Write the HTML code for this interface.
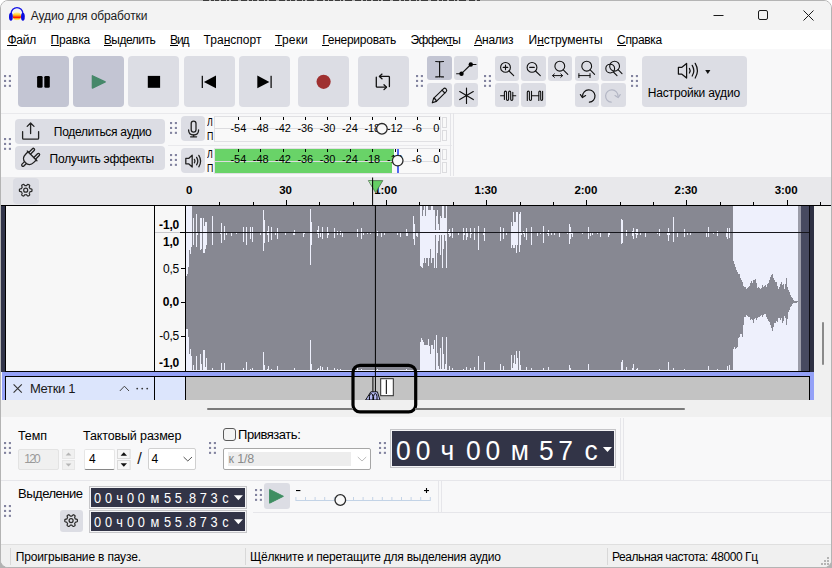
<!DOCTYPE html>
<html lang="ru"><head><meta charset="utf-8"><title>Аудио для обработки</title>
<style>
html,body{margin:0;padding:0;background:#fff;}
body{width:832px;height:568px;overflow:hidden;position:relative;font-family:"Liberation Sans",sans-serif;}
#win{position:absolute;left:0;top:0;width:830px;height:566px;border:1px solid #b4b4b4;border-radius:8px;background:#f8f8f9;overflow:hidden;}
#in{position:absolute;left:-1px;top:-1px;width:832px;height:568px;}
.a{position:absolute;}
.t{position:absolute;white-space:pre;line-height:1;color:#000;}
.btn{position:absolute;background:#dcdde4;border-radius:3px;}
.btn.dn{background:#c3c5d3;}
.hl{position:absolute;height:1px;background:#e6e6e8;}
.vl{position:absolute;width:1px;background:#e6e6e8;}
svg{position:absolute;overflow:visible;}
u{text-decoration:underline;text-decoration-thickness:1px;}
</style></head><body><div class="a" style="left:0;top:558px;width:10px;height:10px;background:#b2b2b2"></div><div class="a" style="left:822px;top:558px;width:10px;height:10px;background:#b2b2b2"></div><div id="win"><div id="in">
<div class="a" style="left:0px;top:0px;width:832px;height:30px;background:#f3f3f3;"></div><svg style="left:4px;top:2px" width="28" height="26" viewBox="4 2 28 26">
<defs><linearGradient id="og" x1="0" y1="0" x2="0" y2="1"><stop offset="0" stop-color="#fff3b0"/><stop offset="0.3" stop-color="#ffd02a"/><stop offset="0.5" stop-color="#ff7a10"/><stop offset="0.58" stop-color="#ff1a00"/><stop offset="0.66" stop-color="#ff1a00"/><stop offset="0.76" stop-color="#ff9a18"/><stop offset="0.9" stop-color="#ffe060"/><stop offset="1" stop-color="#fff3b0"/></linearGradient></defs>
<ellipse cx="16.9" cy="16.3" rx="4.1" ry="4" fill="url(#og)"/>
<path d="M11.2 14.2 V13.4 A5.8 5.8 0 0 1 22.8 13.4 V14.2" fill="none" stroke="#1414e6" stroke-width="1.3"/>
<ellipse cx="10.9" cy="16.7" rx="1.9" ry="4" fill="#0a0ae0"/>
<ellipse cx="22.9" cy="16.7" rx="1.9" ry="4" fill="#0a0ae0"/>
</svg><span class="t" style="left:30.80px;top:10.00px;font-size:12px;color:#1c1c1c;letter-spacing:-0.114px;">Аудио для обработки</span><svg style="left:700px;top:0" width="132" height="30" viewBox="0 0 132 30">
<line x1="13.5" y1="15.5" x2="23.5" y2="15.5" stroke="#1a1a1a" stroke-width="1"/>
<rect x="58.5" y="10.5" width="9" height="9" rx="1.5" fill="none" stroke="#1a1a1a" stroke-width="1"/>
<path d="M103.5 10.5 L113.5 20.5 M113.5 10.5 L103.5 20.5" stroke="#1a1a1a" stroke-width="1" fill="none"/>
</svg><div class="a" style="left:0px;top:30px;width:832px;height:19px;background:#ffffff;"></div><span class="t" style="left:7.40px;top:34.00px;font-size:12px;letter-spacing:-0.172px;">Файл</span><div class="a" style="left:7.40px;top:45px;width:9.12px;height:1px;background:#000"></div><span class="t" style="left:50.50px;top:34.00px;font-size:12px;letter-spacing:-0.169px;">Правка</span><div class="a" style="left:50.50px;top:45px;width:8.62px;height:1px;background:#000"></div><span class="t" style="left:103.70px;top:34.00px;font-size:12px;letter-spacing:-0.466px;">Выделить</span><div class="a" style="left:103.70px;top:45px;width:8.02px;height:1px;background:#000"></div><span class="t" style="left:170.00px;top:34.00px;font-size:12px;letter-spacing:-1.109px;">Вид</span><div class="a" style="left:170.00px;top:45px;width:8.02px;height:1px;background:#000"></div><span class="t" style="left:203.60px;top:34.00px;font-size:12px;letter-spacing:0.023px;">Транспорт</span><div class="a" style="left:223.68px;top:45px;width:6.62px;height:1px;background:#000"></div><span class="t" style="left:275.10px;top:34.00px;font-size:12px;letter-spacing:0.183px;">Треки</span><div class="a" style="left:275.10px;top:45px;width:7.34px;height:1px;background:#000"></div><span class="t" style="left:322.30px;top:34.00px;font-size:12px;letter-spacing:-0.254px;">Генерировать</span><div class="a" style="left:322.30px;top:45px;width:6.50px;height:1px;background:#000"></div><span class="t" style="left:410.50px;top:34.00px;font-size:12px;letter-spacing:-0.677px;">Эффекты</span><div class="a" style="left:447.41px;top:45px;width:5.64px;height:1px;background:#000"></div><span class="t" style="left:474.40px;top:34.00px;font-size:12px;letter-spacing:-0.283px;">Анализ</span><div class="a" style="left:474.40px;top:45px;width:8.02px;height:1px;background:#000"></div><span class="t" style="left:528.60px;top:34.00px;font-size:12px;letter-spacing:-0.073px;">Инструменты</span><div class="a" style="left:537.15px;top:45px;width:6.64px;height:1px;background:#000"></div><span class="t" style="left:617.10px;top:34.00px;font-size:12px;letter-spacing:-0.330px;">Справка</span><div class="a" style="left:617.10px;top:45px;width:8.67px;height:1px;background:#000"></div><div class="hl" style="left:0;top:112.5px;width:832px;background:#e9e9ec"></div><svg style="left:4px;top:75px" width="8" height="13" viewBox="0 0 8 13"><rect x="0" y="0" width="2.1" height="2.1" fill="#82839f"/><rect x="4.85" y="0" width="2.1" height="2.1" fill="#82839f"/><rect x="0" y="4.9" width="2.1" height="2.1" fill="#82839f"/><rect x="4.85" y="4.9" width="2.1" height="2.1" fill="#82839f"/><rect x="0" y="9.8" width="2.1" height="2.1" fill="#82839f"/><rect x="4.85" y="9.8" width="2.1" height="2.1" fill="#82839f"/></svg><div class="btn dn" style="left:18.1px;top:56.2px;width:51px;height:51px;border-radius:4px"></div><div class="btn dn" style="left:73.3px;top:56.2px;width:51px;height:51px;border-radius:4px"></div><div class="btn " style="left:128.4px;top:56.2px;width:51px;height:51px;border-radius:4px"></div><div class="btn " style="left:183.6px;top:56.2px;width:51px;height:51px;border-radius:4px"></div><div class="btn " style="left:239.1px;top:56.2px;width:51px;height:51px;border-radius:4px"></div><div class="btn " style="left:298.3px;top:56.2px;width:51px;height:51px;border-radius:4px"></div><div class="btn " style="left:357.5px;top:56.2px;width:51px;height:51px;border-radius:4px"></div><svg style="left:0;top:56px" width="420" height="51" viewBox="0 56 420 51">
<rect x="37.1" y="75.9" width="5.5" height="11.9" rx="1.4" fill="#000"/><rect x="44.3" y="75.9" width="5.5" height="11.9" rx="1.4" fill="#000"/>
<path d="M92.4 75.8 L105.2 81.9 L92.4 88 Z" fill="#46886a" stroke="#46886a" stroke-width="1.4" stroke-linejoin="round"/>
<rect x="147.8" y="75.9" width="12.3" height="11.9" fill="#000"/>
<rect x="201.7" y="75.8" width="1.2" height="12.2" fill="#000"/><path d="M216 75.6 L203.9 81.9 L216 88.2 Z" fill="#000"/>
<path d="M257.3 75.6 L269.4 81.9 L257.3 88.2 Z" fill="#000"/><rect x="270.5" y="75.8" width="1.2" height="12.2" fill="#000"/>
<circle cx="323.6" cy="81.8" r="7.1" fill="#9f3030"/>
<g fill="none" stroke="#111" stroke-width="1.3" stroke-linecap="round" stroke-linejoin="round">
<path d="M376.3 77.2 V86.4 Q376.3 87.2 377.1 87.2 H386.4"/><path d="M384 84.8 L386.5 87.2 L384 89.6"/>
<path d="M389.4 86.5 V77.2 Q389.4 76.4 388.6 76.4 H379.5"/><path d="M382 74.1 L379.4 76.4 L382 78.8"/>
</g>
</svg><svg style="left:416.2px;top:75px" width="8" height="13" viewBox="0 0 8 13"><rect x="0" y="0" width="2.1" height="2.1" fill="#82839f"/><rect x="4.85" y="0" width="2.1" height="2.1" fill="#82839f"/><rect x="0" y="4.9" width="2.1" height="2.1" fill="#82839f"/><rect x="4.85" y="4.9" width="2.1" height="2.1" fill="#82839f"/><rect x="0" y="9.8" width="2.1" height="2.1" fill="#82839f"/><rect x="4.85" y="9.8" width="2.1" height="2.1" fill="#82839f"/></svg><div class="btn dn" style="left:427.4px;top:56.3px;width:24.4px;height:24.2px"></div><div class="btn " style="left:454.1px;top:56.3px;width:24.4px;height:24.2px"></div><div class="btn " style="left:427.4px;top:83.1px;width:24.4px;height:24.2px"></div><div class="btn " style="left:454.1px;top:83.1px;width:24.4px;height:24.2px"></div><svg style="left:424px;top:52px" width="60" height="60" viewBox="424 52 60 60">
<g fill="none" stroke="#111" stroke-width="1.15" stroke-linecap="round" stroke-linejoin="round">
<path d="M439.6 61.6 V76.8"/>
<path d="M435.7 61.5 Q439.6 61.5 439.6 61.9 Q439.6 61.5 443.5 61.5"/>
<path d="M435.7 76.9 Q439.6 76.9 439.6 76.5 Q439.6 76.9 443.5 76.9"/>
<path d="M456.6 73.7 H461.5 L470.8 64.5 H476"/>
<path d="M432.3 102.8 L433.6 98.4 L443.4 88.8 Q444.6 87.6 446 88.8 Q447.4 90.2 446.2 91.6 L436.4 101.4 Z"/>
<path d="M433.6 98.4 Q435.8 98.6 436.4 101.4"/>
<path d="M442 90.2 L444.8 93"/>
<path d="M466.5 88 V103.4 M459.7 91.6 L473.3 99.6 M459.7 99.6 L473.3 91.6"/>
</g>
<circle cx="461.5" cy="73.7" r="2.2" fill="#000"/><circle cx="470.8" cy="64.5" r="2.2" fill="#000"/>
</svg><svg style="left:483.8px;top:75px" width="8" height="13" viewBox="0 0 8 13"><rect x="0" y="0" width="2.1" height="2.1" fill="#82839f"/><rect x="4.85" y="0" width="2.1" height="2.1" fill="#82839f"/><rect x="0" y="4.9" width="2.1" height="2.1" fill="#82839f"/><rect x="4.85" y="4.9" width="2.1" height="2.1" fill="#82839f"/><rect x="0" y="9.8" width="2.1" height="2.1" fill="#82839f"/><rect x="4.85" y="9.8" width="2.1" height="2.1" fill="#82839f"/></svg><div class="btn " style="left:494.7px;top:56.4px;width:24.4px;height:24.2px"></div><div class="btn " style="left:521.3px;top:56.4px;width:24.4px;height:24.2px"></div><div class="btn " style="left:548px;top:56.4px;width:24.4px;height:24.2px"></div><div class="btn " style="left:574.6px;top:56.4px;width:24.4px;height:24.2px"></div><div class="btn " style="left:601.2px;top:56.4px;width:24.4px;height:24.2px"></div><div class="btn " style="left:494.7px;top:83.1px;width:24.4px;height:24.2px"></div><div class="btn " style="left:521.3px;top:83.1px;width:24.4px;height:24.2px"></div><div class="btn " style="left:574.6px;top:83.1px;width:24.4px;height:24.2px"></div><div class="btn " style="left:601.2px;top:83.1px;width:24.4px;height:24.2px"></div><svg style="left:490px;top:52px" width="140" height="60" viewBox="490 52 140 60">
<g fill="none" stroke="#111" stroke-width="1.1" stroke-linecap="round" stroke-linejoin="round">
<circle cx="505.5" cy="67.4" r="4.9"/><path d="M509 71 L513.7 75.7"/><path d="M503.2 67.4 H507.8 M505.5 65.1 V69.7"/>
<circle cx="532" cy="67.4" r="4.9"/><path d="M535.5 71 L540.3 75.7"/><path d="M529.7 67.4 H534.3"/>
<circle cx="559.8" cy="66.2" r="4.9"/><path d="M563.3 69.8 L567.8 74.3"/>
<path d="M552.6 75.6 H562.6 M554.4 73.9 L552.6 75.6 L554.4 77.3 M560.8 73.9 L562.6 75.6 L560.8 77.3" stroke-width="1"/>
<circle cx="586.7" cy="66.2" r="4.9"/><path d="M590.2 69.8 L594.6 74.3"/>
<path d="M578.9 75.6 H590 M578.9 73.6 V77.6 M590 73.6 V77.6" stroke-width="1"/>
<circle cx="610.2" cy="68.6" r="4.4"/><circle cx="614.6" cy="66.2" r="4.9"/>
<path d="M613.4 72 L617 75.6 M618.1 69.7 L622 73.6"/>
<path d="M500.6 95.7 H504.4 M512.8 95.7 H515.8"/>
<path d="M504.4 99.4 V92.2 Q504.4 91.1 505.45 91.1 Q506.5 91.1 506.5 92.2 V99.3 Q506.5 100.4 507.55 100.4 Q508.6 100.4 508.6 99.3 V92.2 Q508.6 91.1 509.65 91.1 Q510.7 91.1 510.7 92.2 V99.3 Q510.7 100.4 511.75 100.4 Q512.8 100.4 512.8 99.3 V92.2"/>
<path d="M527.3 100.4 V92.2 Q527.3 91.1 528.35 91.1 Q529.4 91.1 529.4 92.2 V99.3 Q529.4 100.4 530.45 100.4 Q531.5 100.4 531.5 99.3 V91.2"/>
<path d="M531.5 95.7 H538.8"/>
<path d="M538.8 100.4 V92.2 Q538.8 91.1 539.75 91.1 Q540.7 91.1 540.7 92.2 V99.3 Q540.7 100.4 541.65 100.4 Q542.6 100.4 542.6 99.3 V91.2"/>
<path d="M582.6 96.2 A6.2 6.2 0 1 1 589.4 102.2" stroke-width="1.2"/>
<path d="M580.4 94.6 L582.5 97.6 L585.6 95.6" stroke-width="1.2"/>
</g>
<g fill="none" stroke="#b3b6c4" stroke-width="1.2" stroke-linecap="round" stroke-linejoin="round">
<path d="M618 96.2 A6.2 6.2 0 1 0 611.2 102.2"/>
<path d="M620.2 94.6 L618.1 97.6 L615 95.6"/>
</g>
</svg><svg style="left:630.8px;top:75px" width="8" height="13" viewBox="0 0 8 13"><rect x="0" y="0" width="2.1" height="2.1" fill="#82839f"/><rect x="4.85" y="0" width="2.1" height="2.1" fill="#82839f"/><rect x="0" y="4.9" width="2.1" height="2.1" fill="#82839f"/><rect x="4.85" y="4.9" width="2.1" height="2.1" fill="#82839f"/><rect x="0" y="9.8" width="2.1" height="2.1" fill="#82839f"/><rect x="4.85" y="9.8" width="2.1" height="2.1" fill="#82839f"/></svg><div class="btn" style="left:641.8px;top:56.3px;width:105.2px;height:50.8px;border-radius:4px"></div><span class="t" style="left:647.80px;top:87.00px;font-size:12px;letter-spacing:-0.172px;">Настройки аудио</span><svg style="left:670px;top:58px" width="50" height="26" viewBox="670 58 50 26">
<g fill="none" stroke="#111" stroke-width="1.25" stroke-linecap="round" stroke-linejoin="round">
<path d="M678.4 67.4 H681.6 L686.6 63.4 V78 L681.6 74 H678.4 Z"/>
<path d="M689.4 68.4 Q690.9 70.7 689.4 73"/>
<path d="M692.2 65.4 Q695.4 70.7 692.2 76"/>
<path d="M695.2 63.4 Q699.6 70.7 695.2 78"/>
</g>
<path d="M705.2 70 H710.4 L707.8 74 Z" fill="#111"/>
</svg><div class="hl" style="left:168px;top:145px;width:284px;background:#e9e9ec"></div><div class="vl" style="left:450px;top:113px;height:63px;background:#e4e4e8"></div><div class="vl" style="left:453px;top:113px;height:63px;background:#e4e4e8"></div><svg style="left:4.2px;top:138.2px" width="8" height="13" viewBox="0 0 8 13"><rect x="0" y="0" width="2.1" height="2.1" fill="#82839f"/><rect x="4.85" y="0" width="2.1" height="2.1" fill="#82839f"/><rect x="0" y="4.9" width="2.1" height="2.1" fill="#82839f"/><rect x="4.85" y="4.9" width="2.1" height="2.1" fill="#82839f"/><rect x="0" y="9.8" width="2.1" height="2.1" fill="#82839f"/><rect x="4.85" y="9.8" width="2.1" height="2.1" fill="#82839f"/></svg><div class="btn" style="left:15.2px;top:119.4px;width:149.8px;height:24.2px;border-radius:4px"></div><div class="btn" style="left:15.2px;top:146.1px;width:149.8px;height:24px;border-radius:4px"></div><span class="t" style="left:53.80px;top:126.00px;font-size:12px;letter-spacing:-0.275px;">Поделиться аудио</span><span class="t" style="left:49.60px;top:153.00px;font-size:12px;letter-spacing:-0.235px;">Получить эффекты</span><svg style="left:15px;top:119px" width="40" height="52" viewBox="15 119 40 52">
<g fill="none" stroke="#222" stroke-width="1.3" stroke-linecap="round" stroke-linejoin="round">
<path d="M22.6 131.6 V138.2 Q22.6 139.2 23.6 139.2 H37.6 Q38.6 139.2 38.6 138.2 V131.6"/>
<path d="M30.6 133.6 V123.3 M27.2 126.4 L30.6 123 L34 126.4"/>
</g>
<g transform="translate(30.0 158.0) rotate(45)" fill="none" stroke="#222" stroke-width="1.3" stroke-linecap="round" stroke-linejoin="round">
<path d="M-6.8 -3 H6.8"/>
<path d="M-5.8 -3 V0.4 Q-5.8 6.5 0 6.5 Q5.8 6.5 5.8 0.4 V-3"/>
<path d="M-4.8 -3 V-8.3 Q-4.8 -9.5 -3.6 -9.5 Q-2.4 -9.5 -2.4 -8.3 V-3"/>
<path d="M2.4 -3 V-8.3 Q2.4 -9.5 3.6 -9.5 Q4.8 -9.5 4.8 -8.3 V-3"/>
<path d="M-1.3 6.4 V10 Q-1.3 11.2 0 11.2 Q1.3 11.2 1.3 10 V6.4"/>
</g>
</svg><svg style="left:170px;top:122.3px" width="8" height="13" viewBox="0 0 8 13"><rect x="0" y="0" width="2.1" height="2.1" fill="#82839f"/><rect x="4.85" y="0" width="2.1" height="2.1" fill="#82839f"/><rect x="0" y="4.9" width="2.1" height="2.1" fill="#82839f"/><rect x="4.85" y="4.9" width="2.1" height="2.1" fill="#82839f"/><rect x="0" y="9.8" width="2.1" height="2.1" fill="#82839f"/><rect x="4.85" y="9.8" width="2.1" height="2.1" fill="#82839f"/></svg><svg style="left:170px;top:154px" width="8" height="13" viewBox="0 0 8 13"><rect x="0" y="0" width="2.1" height="2.1" fill="#82839f"/><rect x="4.85" y="0" width="2.1" height="2.1" fill="#82839f"/><rect x="0" y="4.9" width="2.1" height="2.1" fill="#82839f"/><rect x="4.85" y="4.9" width="2.1" height="2.1" fill="#82839f"/><rect x="0" y="9.8" width="2.1" height="2.1" fill="#82839f"/><rect x="4.85" y="9.8" width="2.1" height="2.1" fill="#82839f"/></svg><div class="btn" style="left:181px;top:116.3px;width:24px;height:24.5px;border-radius:4px"></div><div class="btn" style="left:181px;top:148px;width:24px;height:24.5px;border-radius:4px"></div><svg style="left:181px;top:116px" width="24" height="58" viewBox="181 116 24 58">
<g fill="none" stroke="#222" stroke-width="1.3" stroke-linecap="round">
<rect x="191.2" y="121.2" width="4.8" height="11" rx="2.4"/>
<path d="M188.6 130 Q188.6 135 193.6 135 Q198.6 135 198.6 130"/>
<path d="M193.6 135.2 V136.6 M190.6 136.8 H196.6"/>
<path d="M185.8 158.4 H188.6 L192.2 155.2 V167 L188.6 163.8 H185.8 Z" stroke-linejoin="round"/>
<path d="M194.4 159.4 Q195.6 161.1 194.4 162.8"/>
<path d="M196.6 157.4 Q199 161.1 196.6 164.8"/>
<path d="M198.8 155.4 Q202.4 161.1 198.8 166.8"/>
</g></svg><span class="t" style="left:207.30px;top:117.00px;font-size:11px;transform:scaleX(0.8);transform-origin:0 50%;">Л</span><span class="t" style="left:207.30px;top:131.00px;font-size:11px;transform:scaleX(0.8);transform-origin:0 50%;">П</span><span class="t" style="left:207.30px;top:149.00px;font-size:11px;transform:scaleX(0.8);transform-origin:0 50%;">Л</span><span class="t" style="left:207.30px;top:163.00px;font-size:11px;transform:scaleX(0.8);transform-origin:0 50%;">П</span><div class="a" style="left:214px;top:116px;width:226.5px;height:26px;background:#f9f9f9;border:1px solid #e0e0e3;box-sizing:border-box"></div><div class="hl" style="left:215px;top:128px;width:225px;background:#dcdcdf"></div><div class="a" style="left:442.3px;top:116.5px;width:4.4px;height:11.6px;border:1px solid #dcdcdf;box-sizing:border-box;background:#f9f9f9"></div><div class="a" style="left:442.3px;top:129.6px;width:4.4px;height:11.4px;border:1px solid #dcdcdf;box-sizing:border-box;background:#f9f9f9"></div><div class="a" style="left:214px;top:148px;width:226.5px;height:26px;background:#f9f9f9;border:1px solid #e0e0e3;box-sizing:border-box"></div><div class="hl" style="left:215px;top:160.6px;width:225px;background:#dcdcdf"></div><div class="a" style="left:215px;top:149px;width:179.4px;height:11.5px;background:#69d368;"></div><div class="a" style="left:215px;top:162px;width:177px;height:10.6px;background:#69d368;"></div><div class="a" style="left:396.5px;top:149px;width:2.1px;height:23.6px;background:#5169ee;"></div><div class="a" style="left:442.3px;top:148.5px;width:4.4px;height:11.6px;border:1px solid #dcdcdf;box-sizing:border-box;background:#f9f9f9"></div><div class="a" style="left:442.3px;top:161.6px;width:4.4px;height:11.4px;border:1px solid #dcdcdf;box-sizing:border-box;background:#f9f9f9"></div><div class="a" style="left:238px;top:117px;width:1px;height:3.2px;background:#000;"></div><span class="t" style="left:230.50px;top:123.00px;font-size:11px;letter-spacing:-0.053px;">-54</span><div class="a" style="left:260px;top:117px;width:1px;height:3.2px;background:#000;"></div><span class="t" style="left:252.80px;top:123.00px;font-size:11px;letter-spacing:-0.053px;">-48</span><div class="a" style="left:283px;top:117px;width:1px;height:3.2px;background:#000;"></div><span class="t" style="left:275.10px;top:123.00px;font-size:11px;letter-spacing:-0.053px;">-42</span><div class="a" style="left:305px;top:117px;width:1px;height:3.2px;background:#000;"></div><span class="t" style="left:297.40px;top:123.00px;font-size:11px;letter-spacing:-0.053px;">-36</span><div class="a" style="left:327px;top:117px;width:1px;height:3.2px;background:#000;"></div><span class="t" style="left:319.70px;top:123.00px;font-size:11px;letter-spacing:-0.053px;">-30</span><div class="a" style="left:350px;top:117px;width:1px;height:3.2px;background:#000;"></div><span class="t" style="left:342.00px;top:123.00px;font-size:11px;letter-spacing:-0.053px;">-24</span><div class="a" style="left:372px;top:117px;width:1px;height:3.2px;background:#000;"></div><span class="t" style="left:364.40px;top:123.00px;font-size:11px;letter-spacing:-0.053px;">-18</span><div class="a" style="left:395px;top:117px;width:1px;height:3.2px;background:#000;"></div><span class="t" style="left:386.90px;top:123.00px;font-size:11px;letter-spacing:-0.053px;">-12</span><div class="a" style="left:417px;top:117px;width:1px;height:3.2px;background:#000;"></div><span class="t" style="left:412.00px;top:123.00px;font-size:11px;letter-spacing:0.019px;">-6</span><div class="a" style="left:439px;top:117px;width:1px;height:3.2px;background:#000;"></div><span class="t" style="left:433.18px;top:123.00px;font-size:11px;">0</span><div class="a" style="left:238px;top:149px;width:1px;height:3.2px;background:#000;"></div><span class="t" style="left:230.50px;top:154.00px;font-size:11px;letter-spacing:-0.053px;">-54</span><div class="a" style="left:260px;top:149px;width:1px;height:3.2px;background:#000;"></div><span class="t" style="left:252.80px;top:154.00px;font-size:11px;letter-spacing:-0.053px;">-48</span><div class="a" style="left:283px;top:149px;width:1px;height:3.2px;background:#000;"></div><span class="t" style="left:275.10px;top:154.00px;font-size:11px;letter-spacing:-0.053px;">-42</span><div class="a" style="left:305px;top:149px;width:1px;height:3.2px;background:#000;"></div><span class="t" style="left:297.40px;top:154.00px;font-size:11px;letter-spacing:-0.053px;">-36</span><div class="a" style="left:327px;top:149px;width:1px;height:3.2px;background:#000;"></div><span class="t" style="left:319.70px;top:154.00px;font-size:11px;letter-spacing:-0.053px;">-30</span><div class="a" style="left:350px;top:149px;width:1px;height:3.2px;background:#000;"></div><span class="t" style="left:342.00px;top:154.00px;font-size:11px;letter-spacing:-0.053px;">-24</span><div class="a" style="left:372px;top:149px;width:1px;height:3.2px;background:#000;"></div><span class="t" style="left:364.40px;top:154.00px;font-size:11px;letter-spacing:-0.053px;">-18</span><div class="a" style="left:395px;top:149px;width:1px;height:3.2px;background:#000;"></div><span class="t" style="left:386.90px;top:154.00px;font-size:11px;letter-spacing:-0.053px;">-12</span><div class="a" style="left:417px;top:149px;width:1px;height:3.2px;background:#000;"></div><span class="t" style="left:412.00px;top:154.00px;font-size:11px;letter-spacing:0.019px;">-6</span><div class="a" style="left:439px;top:149px;width:1px;height:3.2px;background:#000;"></div><span class="t" style="left:433.18px;top:154.00px;font-size:11px;">0</span><svg style="left:370px;top:120px" width="40" height="50" viewBox="370 120 40 50">
<circle cx="381.9" cy="128.8" r="5.3" fill="#f9f9f9" stroke="#2a2a2a" stroke-width="1.3"/>
<circle cx="397.7" cy="160.6" r="5.3" fill="#f9f9f9" stroke="#2a2a2a" stroke-width="1.3"/>
</svg><div class="a" style="left:0px;top:176.5px;width:832px;height:29px;background:#e8e8eb;"></div><div class="btn" style="left:13px;top:177.6px;width:26px;height:26px;border-radius:4px;background:#dcdde4"></div><svg style="left:13px;top:178px" width="26" height="25" viewBox="13 178 26 25"><path d="M32.00 190.20 L31.99 190.53 L31.97 190.86 L31.92 191.19 L31.51 191.43 L30.93 191.60 L30.36 191.71 L29.93 191.83 L29.84 192.04 L29.74 192.26 L29.63 192.47 L29.50 192.67 L29.37 192.87 L29.23 193.05 L29.34 193.48 L29.53 194.03 L29.67 194.61 L29.66 195.10 L29.40 195.30 L29.13 195.48 L28.85 195.66 L28.56 195.81 L28.26 195.96 L27.96 196.08 L27.53 195.85 L27.10 195.43 L26.72 194.99 L26.41 194.68 L26.17 194.71 L25.94 194.73 L25.70 194.74 L25.46 194.73 L25.23 194.71 L24.99 194.68 L24.68 194.99 L24.30 195.43 L23.87 195.85 L23.44 196.08 L23.14 195.96 L22.84 195.81 L22.55 195.66 L22.27 195.48 L22.00 195.30 L21.74 195.10 L21.73 194.61 L21.87 194.03 L22.06 193.48 L22.17 193.05 L22.03 192.87 L21.90 192.67 L21.77 192.47 L21.66 192.26 L21.56 192.04 L21.47 191.83 L21.04 191.71 L20.47 191.60 L19.89 191.43 L19.48 191.19 L19.43 190.86 L19.41 190.53 L19.40 190.20 L19.41 189.87 L19.43 189.54 L19.48 189.21 L19.89 188.97 L20.47 188.80 L21.04 188.69 L21.47 188.57 L21.56 188.36 L21.66 188.14 L21.77 187.93 L21.90 187.73 L22.03 187.53 L22.17 187.35 L22.06 186.92 L21.87 186.37 L21.73 185.79 L21.74 185.30 L22.00 185.10 L22.27 184.92 L22.55 184.74 L22.84 184.59 L23.14 184.44 L23.44 184.32 L23.87 184.55 L24.30 184.97 L24.68 185.41 L24.99 185.72 L25.23 185.69 L25.46 185.67 L25.70 185.66 L25.94 185.67 L26.17 185.69 L26.41 185.72 L26.72 185.41 L27.10 184.97 L27.53 184.55 L27.96 184.32 L28.26 184.44 L28.56 184.59 L28.85 184.74 L29.13 184.92 L29.40 185.10 L29.66 185.30 L29.67 185.79 L29.53 186.37 L29.34 186.92 L29.23 187.35 L29.37 187.53 L29.50 187.73 L29.63 187.93 L29.74 188.14 L29.84 188.36 L29.93 188.57 L30.36 188.69 L30.93 188.80 L31.51 188.97 L31.92 189.21 L31.97 189.54 L31.99 189.87 Z" fill="none" stroke="#2a2a2a" stroke-width="1.2" stroke-linejoin="round"/><circle cx="25.7" cy="190.2" r="2.016" fill="none" stroke="#2a2a2a" stroke-width="1.2"/></svg><div class="a" style="left:1px;top:205px;width:831px;height:1px;background:#000;"></div><div class="a" style="left:219px;top:202.3px;width:1px;height:2.7px;background:#000;"></div><div class="a" style="left:253px;top:202.3px;width:1px;height:2.7px;background:#000;"></div><div class="a" style="left:286px;top:199.5px;width:1px;height:5.5px;background:#000;"></div><div class="a" style="left:319px;top:202.3px;width:1px;height:2.7px;background:#000;"></div><div class="a" style="left:353px;top:202.3px;width:1px;height:2.7px;background:#000;"></div><div class="a" style="left:386px;top:199.5px;width:1px;height:5.5px;background:#000;"></div><div class="a" style="left:419px;top:202.3px;width:1px;height:2.7px;background:#000;"></div><div class="a" style="left:453px;top:202.3px;width:1px;height:2.7px;background:#000;"></div><div class="a" style="left:486px;top:199.5px;width:1px;height:5.5px;background:#000;"></div><div class="a" style="left:520px;top:202.3px;width:1px;height:2.7px;background:#000;"></div><div class="a" style="left:553px;top:202.3px;width:1px;height:2.7px;background:#000;"></div><div class="a" style="left:586px;top:199.5px;width:1px;height:5.5px;background:#000;"></div><div class="a" style="left:620px;top:202.3px;width:1px;height:2.7px;background:#000;"></div><div class="a" style="left:653px;top:202.3px;width:1px;height:2.7px;background:#000;"></div><div class="a" style="left:686px;top:199.5px;width:1px;height:5.5px;background:#000;"></div><div class="a" style="left:720px;top:202.3px;width:1px;height:2.7px;background:#000;"></div><div class="a" style="left:753px;top:202.3px;width:1px;height:2.7px;background:#000;"></div><div class="a" style="left:787px;top:199.5px;width:1px;height:5.5px;background:#000;"></div><div class="a" style="left:820px;top:202.3px;width:1px;height:2.7px;background:#000;"></div><span class="t" style="left:186.00px;top:185.00px;font-size:11.5px;font-weight:700;">0</span><span class="t" style="left:279.22px;top:185.00px;font-size:11.5px;font-weight:700;letter-spacing:-0.197px;">30</span><span class="t" style="left:374.25px;top:185.00px;font-size:11.5px;font-weight:700;letter-spacing:-0.077px;">1:00</span><span class="t" style="left:474.38px;top:185.00px;font-size:11.5px;font-weight:700;letter-spacing:-0.077px;">1:30</span><span class="t" style="left:574.50px;top:185.00px;font-size:11.5px;font-weight:700;letter-spacing:-0.077px;">2:00</span><span class="t" style="left:674.62px;top:185.00px;font-size:11.5px;font-weight:700;letter-spacing:-0.077px;">2:30</span><span class="t" style="left:774.75px;top:185.00px;font-size:11.5px;font-weight:700;letter-spacing:-0.077px;">3:00</span><div class="a" style="left:0px;top:400px;width:832px;height:17px;background:#f0f0f0;"></div><div class="a" style="left:1px;top:206px;width:4px;height:166px;background:#31344a;"></div><div class="a" style="left:810px;top:206px;width:4.2px;height:166px;background:#2e3043;"></div><div class="a" style="left:809.2px;top:206px;width:1.1px;height:166px;background:#0c0c12;"></div><div class="a" style="left:814.2px;top:206px;width:18px;height:194px;background:#f0f0f0;"></div><div class="a" style="left:6px;top:206px;width:148px;height:165px;background:#f7f7f7;"></div><div class="a" style="left:155px;top:206px;width:30px;height:165px;background:#f7f7f7;"></div><div class="a" style="left:5px;top:205px;width:1px;height:167px;background:#000;"></div><div class="a" style="left:154px;top:205px;width:1px;height:167px;background:#000;"></div><div class="a" style="left:185px;top:205px;width:1px;height:167px;background:#000;"></div><div class="a" style="left:155px;top:232px;width:25px;height:1px;background:#c8c8cc;"></div><div class="a" style="left:186px;top:206px;width:612px;height:165px;background:#eef0fc;"></div><div class="a" style="left:798px;top:206px;width:3.2px;height:165px;background:#9b9ca8;"></div><div class="a" style="left:801.2px;top:206px;width:8px;height:165px;background:#474a60;"></div><svg style="left:0;top:206px" width="832" height="165" viewBox="0 206 832 165" shape-rendering="crispEdges"><polygon fill="#878892" points="186,276.155 187,276.155 187,274.1 188,274.1 188,267.25 189,267.25 189,250.125 190,250.125 190,253.55 191,253.55 191,246.7 192,246.7 192,233 193,233 193,245 194,245 194,233 195,233 195,233 196,233 196,247 197,247 197,233 198,233 198,233 199,233 199,233 200,233 200,250 201,250 201,249 202,249 202,233 203,233 203,253 204,253 204,253 205,253 205,249 206,249 206,245 207,245 207,233 208,233 208,233 209,233 209,233 210,233 210,233 211,233 211,233 212,233 212,245 213,245 213,233 214,233 214,233 215,233 215,233 216,233 216,233 217,233 217,233 218,233 218,233 219,233 219,233 220,233 220,233 221,233 221,243 222,243 222,233 223,233 223,233 224,233 224,240 225,240 225,233 226,233 226,233 227,233 227,233 228,233 228,233 229,233 229,233 230,233 230,233 231,233 231,233 232,233 232,233 233,233 233,233 234,233 234,233 235,233 235,233 236,233 236,233 237,233 237,233 238,233 238,233 239,233 239,233 240,233 240,233 241,233 241,233 242,233 242,233 243,233 243,242 244,242 244,233 245,233 245,233 246,233 246,245 247,245 247,233 248,233 248,233 249,233 249,233 250,233 250,239 251,239 251,233 252,233 252,242 253,242 253,233 254,233 254,233 255,233 255,233 256,233 256,233 257,233 257,233 258,233 258,233 259,233 259,233 260,233 260,233 261,233 261,233 262,233 262,233 263,233 263,251 264,251 264,243 265,243 265,233 266,233 266,233 267,233 267,235 268,235 268,242 269,242 269,233 270,233 270,233 271,233 271,240 272,240 272,233 273,233 273,233 274,233 274,233 275,233 275,233 276,233 276,233 277,233 277,239 278,239 278,233 279,233 279,233 280,233 280,233 281,233 281,233 282,233 282,233 283,233 283,233 284,233 284,233 285,233 285,233 286,233 286,233 287,233 287,233 288,233 288,233 289,233 289,233 290,233 290,233 291,233 291,233 292,233 292,233 293,233 293,233 294,233 294,235 295,235 295,233 296,233 296,233 297,233 297,233 298,233 298,233 299,233 299,233 300,233 300,233 301,233 301,233 302,233 302,233 303,233 303,233 304,233 304,233 305,233 305,233 306,233 306,233 307,233 307,233 308,233 308,233 309,233 309,233 310,233 310,265 311,265 311,245 312,245 312,233 313,233 313,233 314,233 314,233 315,233 315,233 316,233 316,233 317,233 317,234 318,234 318,238 319,238 319,233 320,233 320,237 321,237 321,233 322,233 322,239 323,239 323,233 324,233 324,233 325,233 325,233 326,233 326,233 327,233 327,238 328,238 328,233 329,233 329,233 330,233 330,233 331,233 331,233 332,233 332,233 333,233 333,233 334,233 334,238 335,238 335,233 336,233 336,233 337,233 337,235 338,235 338,233 339,233 339,233 340,233 340,235 341,235 341,233 342,233 342,233 343,233 343,233 344,233 344,233 345,233 345,233 346,233 346,233 347,233 347,233 348,233 348,233 349,233 349,233 350,233 350,233 351,233 351,233 352,233 352,233 353,233 353,233 354,233 354,233 355,233 355,233 356,233 356,233 357,233 357,237 358,237 358,233 359,233 359,233 360,233 360,233 361,233 361,239 362,239 362,233 363,233 363,233 364,233 364,233 365,233 365,233 366,233 366,233 367,233 367,233 368,233 368,233 369,233 369,233 370,233 370,233 371,233 371,233 372,233 372,233 373,233 373,233 374,233 374,233 375,233 375,233 376,233 376,233 377,233 377,236 378,236 378,233 379,233 379,233 380,233 380,233 381,233 381,233 382,233 382,233 383,233 383,233 384,233 384,233 385,233 385,233 386,233 386,233 387,233 387,233 388,233 388,233 389,233 389,233 390,233 390,233 391,233 391,233 392,233 392,233 393,233 393,233 394,233 394,233 395,233 395,233 396,233 396,233 397,233 397,233 398,233 398,233 399,233 399,233 400,233 400,233 401,233 401,233 402,233 402,233 403,233 403,233 404,233 404,233 405,233 405,233 406,233 406,236 407,236 407,233 408,233 408,233 409,233 409,233 410,233 410,233 411,233 411,233 412,233 412,233 413,233 413,239 414,239 414,245 415,245 415,233 416,233 416,233 417,233 417,233 418,233 418,233 419,233 419,233 420,233 420,266 421,266 421,267 422,267 422,268 423,268 423,263 424,263 424,258 425,258 425,263 426,263 426,258 427,258 427,258 428,258 428,266 429,266 429,258 430,258 430,249 431,249 431,263 432,263 432,258 433,258 433,258 434,258 434,268 435,268 435,235 436,235 436,268 437,268 437,253 438,253 438,241 439,241 439,235 440,235 440,255 441,255 441,235 442,235 442,268 443,268 443,249 444,249 444,235 445,235 445,241 446,241 446,268 447,268 447,233 448,233 448,234 449,234 449,237 450,237 450,233 451,233 451,233 452,233 452,238 453,238 453,233 454,233 454,233 455,233 455,233 456,233 456,233 457,233 457,233 458,233 458,233 459,233 459,233 460,233 460,233 461,233 461,233 462,233 462,233 463,233 463,240 464,240 464,233 465,233 465,233 466,233 466,240 467,240 467,233 468,233 468,233 469,233 469,233 470,233 470,238 471,238 471,233 472,233 472,233 473,233 473,233 474,233 474,240 475,240 475,233 476,233 476,233 477,233 477,233 478,233 478,250 479,250 479,233 480,233 480,233 481,233 481,233 482,233 482,233 483,233 483,233 484,233 484,241 485,241 485,233 486,233 486,233 487,233 487,233 488,233 488,233 489,233 489,233 490,233 490,233 491,233 491,233 492,233 492,233 493,233 493,233 494,233 494,233 495,233 495,233 496,233 496,233 497,233 497,233 498,233 498,233 499,233 499,233 500,233 500,241 501,241 501,233 502,233 502,233 503,233 503,239 504,239 504,233 505,233 505,233 506,233 506,233 507,233 507,233 508,233 508,233 509,233 509,233 510,233 510,233 511,233 511,248 512,248 512,245 513,245 513,248 514,248 514,248 515,248 515,245 516,245 516,253 517,253 517,245 518,245 518,233 519,233 519,252 520,252 520,245 521,245 521,233 522,233 522,233 523,233 523,234 524,234 524,233 525,233 525,233 526,233 526,240 527,240 527,233 528,233 528,233 529,233 529,233 530,233 530,233 531,233 531,245 532,245 532,233 533,233 533,233 534,233 534,233 535,233 535,233 536,233 536,233 537,233 537,233 538,233 538,233 539,233 539,233 540,233 540,233 541,233 541,233 542,233 542,233 543,233 543,243 544,243 544,233 545,233 545,233 546,233 546,233 547,233 547,234 548,234 548,236 549,236 549,233 550,233 550,233 551,233 551,233 552,233 552,233 553,233 553,233 554,233 554,233 555,233 555,233 556,233 556,233 557,233 557,233 558,233 558,233 559,233 559,233 560,233 560,233 561,233 561,233 562,233 562,233 563,233 563,233 564,233 564,233 565,233 565,233 566,233 566,233 567,233 567,233 568,233 568,233 569,233 569,244 570,244 570,239 571,239 571,233 572,233 572,233 573,233 573,233 574,233 574,233 575,233 575,233 576,233 576,233 577,233 577,233 578,233 578,233 579,233 579,233 580,233 580,233 581,233 581,233 582,233 582,233 583,233 583,233 584,233 584,233 585,233 585,233 586,233 586,233 587,233 587,233 588,233 588,239 589,239 589,233 590,233 590,233 591,233 591,233 592,233 592,235 593,235 593,233 594,233 594,233 595,233 595,233 596,233 596,233 597,233 597,234 598,234 598,233 599,233 599,233 600,233 600,233 601,233 601,233 602,233 602,233 603,233 603,233 604,233 604,233 605,233 605,233 606,233 606,233 607,233 607,233 608,233 608,233 609,233 609,233 610,233 610,233 611,233 611,233 612,233 612,233 613,233 613,233 614,233 614,233 615,233 615,233 616,233 616,233 617,233 617,233 618,233 618,233 619,233 619,233 620,233 620,233 621,233 621,244 622,244 622,243 623,243 623,233 624,233 624,233 625,233 625,233 626,233 626,236 627,236 627,233 628,233 628,233 629,233 629,233 630,233 630,233 631,233 631,233 632,233 632,236 633,236 633,239 634,239 634,233 635,233 635,233 636,233 636,238 637,238 637,235 638,235 638,233 639,233 639,233 640,233 640,233 641,233 641,233 642,233 642,233 643,233 643,233 644,233 644,233 645,233 645,233 646,233 646,233 647,233 647,233 648,233 648,233 649,233 649,233 650,233 650,233 651,233 651,233 652,233 652,233 653,233 653,233 654,233 654,233 655,233 655,233 656,233 656,233 657,233 657,233 658,233 658,233 659,233 659,236 660,236 660,233 661,233 661,233 662,233 662,233 663,233 663,233 664,233 664,233 665,233 665,233 666,233 666,233 667,233 667,233 668,233 668,241 669,241 669,233 670,233 670,233 671,233 671,233 672,233 672,233 673,233 673,242 674,242 674,233 675,233 675,233 676,233 676,233 677,233 677,233 678,233 678,233 679,233 679,233 680,233 680,233 681,233 681,233 682,233 682,233 683,233 683,233 684,233 684,237 685,237 685,233 686,233 686,233 687,233 687,233 688,233 688,233 689,233 689,233 690,233 690,233 691,233 691,233 692,233 692,233 693,233 693,233 694,233 694,233 695,233 695,233 696,233 696,233 697,233 697,233 698,233 698,233 699,233 699,233 700,233 700,233 701,233 701,233 702,233 702,233 703,233 703,233 704,233 704,233 705,233 705,233 706,233 706,233 707,233 707,233 708,233 708,237 709,237 709,233 710,233 710,233 711,233 711,233 712,233 712,233 713,233 713,233 714,233 714,233 715,233 715,233 716,233 716,233 717,233 717,236 718,236 718,233 719,233 719,233 720,233 720,233 721,233 721,233 722,233 722,233 723,233 723,233 724,233 724,233 725,233 725,233 726,233 726,233 727,233 727,239 728,239 728,233 729,233 729,238 730,238 730,233 731,233 731,233 732,233 732,233 733,233 733,261 734,261 734,264 735,264 735,267 736,267 736,270 737,270 737,271.75 738,271.75 738,273.5 739,273.5 739,274.25 740,274.25 740,278 741,278 741,279.667 742,279.667 742,282.333 743,282.333 743,286 744,286 744,287 745,287 745,287 746,287 746,289 747,289 747,288 748,288 748,287 749,287 749,286 750,286 750,283 751,283 751,280.8 752,280.8 752,282.6 753,282.6 753,280.4 754,280.4 754,280.2 755,280.2 755,279 756,279 756,282.5 757,282.5 757,288 758,288 758,287 759,287 759,288 760,288 760,289 761,289 761,288 762,288 762,285 763,285 763,286.75 764,286.75 764,285.5 765,285.5 765,285.25 766,285.25 766,287 767,287 767,283.667 768,283.667 768,283.333 769,283.333 769,280 770,280 770,276.667 771,276.667 771,275.333 772,275.333 772,274 773,274 773,277.667 774,277.667 774,280.333 775,280.333 775,282 776,282 776,281.5 777,281.5 777,286 778,286 778,288.5 779,288.5 779,286.567 780,286.567 780,283.633 781,283.633 781,281.7 782,281.7 782,285.033 783,285.033 783,284.367 784,284.367 784,288.7 785,288.7 785,283.6 786,283.6 786,277.5 787,277.5 787,286.75 788,286.75 788,290 789,290 789,292.333 790,292.333 790,294.667 791,294.667 791,297 792,297 792,298.333 793,298.333 793,299.667 794,299.667 794,301 795,301 795,301 796,301 796,301 797,301 797,301 798,301 798,302.333 797,302.333 797,302.5 796,302.5 796,302.667 795,302.667 795,302.833 794,302.833 794,303 793,303 793,304.467 792,304.467 792,305.933 791,305.933 791,307.4 790,307.4 790,309.7 789,309.7 789,312 788,312 788,318.5 787,318.5 787,325 786,325 786,318.3 785,318.3 785,315.6 784,315.6 784,320.5 783,320.5 783,323.4 782,323.4 782,318.267 781,318.267 781,320.133 780,320.133 780,318 779,318 779,317.85 778,317.85 778,321.7 777,321.7 777,320.55 776,320.55 776,323.4 775,323.4 775,323.1 774,323.1 774,326.8 773,326.8 773,330.5 772,330.5 772,327.6 771,327.6 771,324.7 770,324.7 770,322.133 769,322.133 769,320.567 768,320.567 768,319 767,319 767,317.467 766,317.467 766,313.933 765,313.933 765,314.4 764,314.4 764,314.7 763,314.7 763,317 762,317 762,315.3 761,315.3 761,315.6 760,315.6 760,317.45 759,317.45 759,317.3 758,317.3 758,318.15 757,318.15 757,320 756,320 756,318.167 755,318.167 755,319.333 754,319.333 754,322.5 753,322.5 753,320 752,320 752,318.5 751,318.5 751,320 750,320 750,316.8 749,316.8 749,316.6 748,316.6 748,316.4 747,316.4 747,314.933 746,314.933 746,317.467 745,317.467 745,317 744,317 744,325 743,325 743,337 742,337 742,334 741,334 741,333.567 740,333.567 740,337.133 739,337.133 739,337.7 738,337.7 738,347 737,347 737,348 736,348 736,349 735,349 735,347 734,347 734,349 733,349 733,370 732,370 732,370 731,370 731,370 730,370 730,365 729,365 729,370 728,370 728,365.8 727,365.8 727,370 726,370 726,370 725,370 725,370 724,370 724,370 723,370 723,370 722,370 722,370 721,370 721,370 720,370 720,370 719,370 719,370 718,370 718,368.8 717,368.8 717,370 716,370 716,370 715,370 715,370 714,370 714,370 713,370 713,370 712,370 712,370 711,370 711,370 710,370 710,370 709,370 709,366 708,366 708,370 707,370 707,370 706,370 706,370 705,370 705,370 704,370 704,370 703,370 703,370 702,370 702,370 701,370 701,370 700,370 700,370 699,370 699,370 698,370 698,370 697,370 697,370 696,370 696,370 695,370 695,370 694,370 694,370 693,370 693,370 692,370 692,370 691,370 691,370 690,370 690,370 689,370 689,370 688,370 688,370 687,370 687,370 686,370 686,370 685,370 685,369.2 684,369.2 684,370 683,370 683,370 682,370 682,370 681,370 681,370 680,370 680,370 679,370 679,370 678,370 678,370 677,370 677,370 676,370 676,370 675,370 675,370 674,370 674,368.2 673,368.2 673,370 672,370 672,370 671,370 671,370 670,370 670,370 669,370 669,362 668,362 668,370 667,370 667,370 666,370 666,370 665,370 665,370 664,370 664,370 663,370 663,370 662,370 662,370 661,370 661,370 660,370 660,368.8 659,368.8 659,370 658,370 658,370 657,370 657,370 656,370 656,370 655,370 655,370 654,370 654,370 653,370 653,370 652,370 652,370 651,370 651,370 650,370 650,370 649,370 649,370 648,370 648,370 647,370 647,370 646,370 646,370 645,370 645,370 644,370 644,370 643,370 643,370 642,370 642,370 641,370 641,370 640,370 640,370 639,370 639,370 638,370 638,368 637,368 637,369 636,369 636,370 635,370 635,370 634,370 634,364 633,364 633,367.9 632,367.9 632,370 631,370 631,370 630,370 630,370 629,370 629,370 628,370 628,370 627,370 627,367 626,367 626,370 625,370 625,370 624,370 624,370 623,370 623,360 622,360 622,362.3 621,362.3 621,370 620,370 620,370 619,370 619,370 618,370 618,370 617,370 617,370 616,370 616,370 615,370 615,370 614,370 614,370 613,370 613,370 612,370 612,370 611,370 611,370 610,370 610,370 609,370 609,370 608,370 608,370 607,370 607,370 606,370 606,370 605,370 605,370 604,370 604,370 603,370 603,370 602,370 602,370 601,370 601,370 600,370 600,370 599,370 599,370 598,370 598,369.6 597,369.6 597,370 596,370 596,370 595,370 595,370 594,370 594,370 593,370 593,369.6 592,369.6 592,370 591,370 591,370 590,370 590,370 589,370 589,364 588,364 588,370 587,370 587,370 586,370 586,370 585,370 585,370 584,370 584,370 583,370 583,370 582,370 582,370 581,370 581,370 580,370 580,370 579,370 579,370 578,370 578,370 577,370 577,370 576,370 576,370 575,370 575,370 574,370 574,370 573,370 573,370 572,370 572,370 571,370 571,367.6 570,367.6 570,364.5 569,364.5 569,370 568,370 568,370 567,370 567,370 566,370 566,370 565,370 565,370 564,370 564,370 563,370 563,370 562,370 562,370 561,370 561,370 560,370 560,370 559,370 559,370 558,370 558,370 557,370 557,370 556,370 556,370 555,370 555,370 554,370 554,370 553,370 553,370 552,370 552,370 551,370 551,370 550,370 550,370 549,370 549,367 548,367 548,369.5 547,369.5 547,370 546,370 546,370 545,370 545,370 544,370 544,368 543,368 543,370 542,370 542,370 541,370 541,370 540,370 540,370 539,370 539,370 538,370 538,370 537,370 537,370 536,370 536,370 535,370 535,370 534,370 534,370 533,370 533,370 532,370 532,367.6 531,367.6 531,370 530,370 530,370 529,370 529,370 528,370 528,370 527,370 527,367.2 526,367.2 526,370 525,370 525,370 524,370 524,369.6 523,369.6 523,370 522,370 522,370 521,370 521,365.2 520,365.2 520,351 519,351 519,370 518,370 518,358 517,358 517,351 516,351 516,364 515,364 515,355 514,355 514,362.5 513,362.5 513,367.6 512,367.6 512,355 511,355 511,370 510,370 510,370 509,370 509,370 508,370 508,370 507,370 507,370 506,370 506,370 505,370 505,370 504,370 504,365.8 503,365.8 503,370 502,370 502,370 501,370 501,364.4 500,364.4 500,370 499,370 499,370 498,370 498,370 497,370 497,370 496,370 496,370 495,370 495,370 494,370 494,370 493,370 493,370 492,370 492,370 491,370 491,370 490,370 490,370 489,370 489,370 488,370 488,370 487,370 487,370 486,370 486,370 485,370 485,362 484,362 484,370 483,370 483,370 482,370 482,370 481,370 481,370 480,370 480,370 479,370 479,355.55 478,355.55 478,370 477,370 477,370 476,370 476,370 475,370 475,367.2 474,367.2 474,370 473,370 473,370 472,370 472,370 471,370 471,368 470,368 470,370 469,370 469,370 468,370 468,370 467,370 467,367.2 466,367.2 466,370 465,370 465,370 464,370 464,368.6 463,368.6 463,370 462,370 462,370 461,370 461,370 460,370 460,370 459,370 459,370 458,370 458,370 457,370 457,370 456,370 456,370 455,370 455,370 454,370 454,370 453,370 453,367.5 452,367.5 452,370 451,370 451,370 450,370 450,366 449,366 449,369.8 448,369.8 448,370 447,370 447,336.75 446,336.75 446,364.4 445,364.4 445,368.6 444,368.6 444,354 443,354 443,336.75 442,336.75 442,369 441,369 441,348 440,348 440,368.6 439,368.6 439,366 438,366 438,353 437,353 437,335 436,335 436,369.6 435,369.6 435,340.25 434,340.25 434,348.75 433,348.75 433,345 432,345 432,344.5 431,344.5 431,354 430,354 430,346.25 429,346.25 429,338.65 428,338.65 428,345 427,345 427,345 426,345 426,344.5 425,344.5 425,345 424,345 424,341.5 423,341.5 423,340.25 422,340.25 422,337.7 421,337.7 421,341.95 420,341.95 420,370 419,370 419,370 418,370 418,370 417,370 417,370 416,370 416,370 415,370 415,367.6 414,367.6 414,367 413,367 413,370 412,370 412,370 411,370 411,370 410,370 410,370 409,370 409,370 408,370 408,370 407,370 407,368.5 406,368.5 406,370 405,370 405,370 404,370 404,370 403,370 403,370 402,370 402,370 401,370 401,370 400,370 400,370 399,370 399,370 398,370 398,370 397,370 397,370 396,370 396,370 395,370 395,370 394,370 394,370 393,370 393,370 392,370 392,370 391,370 391,370 390,370 390,370 389,370 389,370 388,370 388,370 387,370 387,370 386,370 386,370 385,370 385,370 384,370 384,370 383,370 383,370 382,370 382,370 381,370 381,370 380,370 380,370 379,370 379,370 378,370 378,368.8 377,368.8 377,370 376,370 376,370 375,370 375,370 374,370 374,370 373,370 373,370 372,370 372,370 371,370 371,370 370,370 370,370 369,370 369,370 368,370 368,370 367,370 367,370 366,370 366,370 365,370 365,370 364,370 364,370 363,370 363,370 362,370 362,368.8 361,368.8 361,370 360,370 360,370 359,370 359,370 358,370 358,367.2 357,367.2 357,370 356,370 356,370 355,370 355,370 354,370 354,370 353,370 353,370 352,370 352,370 351,370 351,370 350,370 350,370 349,370 349,370 348,370 348,370 347,370 347,370 346,370 346,370 345,370 345,370 344,370 344,370 343,370 343,370 342,370 342,370 341,370 341,369.2 340,369.2 340,370 339,370 339,370 338,370 338,369.2 337,369.2 337,370 336,370 336,370 335,370 335,368 334,368 334,370 333,370 333,370 332,370 332,370 331,370 331,370 330,370 330,370 329,370 329,370 328,370 328,366.5 327,366.5 327,370 326,370 326,370 325,370 325,370 324,370 324,370 323,370 323,367 322,367 322,370 321,370 321,366 320,366 320,370 319,370 319,368 318,368 318,369 317,369 317,370 316,370 316,370 315,370 315,370 314,370 314,370 313,370 313,370 312,370 312,364 311,364 311,339.6 310,339.6 310,370 309,370 309,370 308,370 308,370 307,370 307,370 306,370 306,370 305,370 305,370 304,370 304,370 303,370 303,370 302,370 302,370 301,370 301,370 300,370 300,370 299,370 299,370 298,370 298,370 297,370 297,370 296,370 296,370 295,370 295,368 294,368 294,370 293,370 293,370 292,370 292,370 291,370 291,370 290,370 290,370 289,370 289,370 288,370 288,370 287,370 287,370 286,370 286,370 285,370 285,370 284,370 284,370 283,370 283,370 282,370 282,370 281,370 281,370 280,370 280,370 279,370 279,370 278,370 278,365.8 277,365.8 277,370 276,370 276,370 275,370 275,370 274,370 274,370 273,370 273,370 272,370 272,368.6 271,368.6 271,370 270,370 270,370 269,370 269,365.5 268,365.5 268,369 267,369 267,370 266,370 266,370 265,370 265,365 264,365 264,352 263,352 263,370 262,370 262,370 261,370 261,370 260,370 260,370 259,370 259,370 258,370 258,370 257,370 257,370 256,370 256,370 255,370 255,370 254,370 254,370 253,370 253,368.2 252,368.2 252,370 251,370 251,368.8 250,368.8 250,370 249,370 249,370 248,370 248,370 247,370 247,361.6 246,361.6 246,370 245,370 245,370 244,370 244,368.2 243,368.2 243,370 242,370 242,370 241,370 241,370 240,370 240,370 239,370 239,370 238,370 238,370 237,370 237,370 236,370 236,370 235,370 235,370 234,370 234,370 233,370 233,370 232,370 232,370 231,370 231,370 230,370 230,370 229,370 229,370 228,370 228,370 227,370 227,370 226,370 226,370 225,370 225,363 224,363 224,370 223,370 223,370 222,370 222,363 221,363 221,370 220,370 220,370 219,370 219,370 218,370 218,370 217,370 217,370 216,370 216,370 215,370 215,370 214,370 214,370 213,370 213,367.6 212,367.6 212,370 211,370 211,370 210,370 210,370 209,370 209,370 208,370 208,370 207,370 207,358 206,358 206,366.8 205,366.8 205,350 204,350 204,350 203,350 203,370 202,370 202,363.6 201,363.6 201,353.85 200,353.85 200,370 199,370 199,370 198,370 198,370 197,370 197,356 196,356 196,370 195,370 195,370 194,370 194,365.2 193,365.2 193,370 192,370 192,356.3 191,356.3 191,349.45 190,349.45 190,353.731 189,353.731 189,337.462 188,337.462 188,328.9 187,328.9 187,329.003 186,329.003"/><polygon fill="#878892" points="186,206 186,206 187,206 187,206 188,206 188,206 189,206 189,206 190,206 190,206 191,206 191,206 192,206 192,232 193,232 193,218 194,218 194,232 195,232 195,232 196,232 196,214 197,214 197,232 198,232 198,232 199,232 199,232 200,232 200,218 201,218 201,218 202,218 202,232 203,232 203,218 204,218 204,226 205,226 205,222 206,222 206,222 207,222 207,232 208,232 208,232 209,232 209,232 210,232 210,232 211,232 211,232 212,232 212,216 213,216 213,232 214,232 214,232 215,232 215,232 216,232 216,232 217,232 217,232 218,232 218,232 219,232 219,232 220,232 220,232 221,232 221,223 222,223 222,232 223,232 223,232 224,232 224,226 225,226 225,232 226,232 226,232 227,232 227,232 228,232 228,232 229,232 229,232 230,232 230,232 231,232 231,232 232,232 232,232 233,232 233,232 234,232 234,232 235,232 235,232 236,232 236,232 237,232 237,232 238,232 238,232 239,232 239,232 240,232 240,232 241,232 241,232 242,232 242,232 243,232 243,227 244,227 244,232 245,232 245,232 246,232 246,227 247,227 247,232 248,232 248,232 249,232 249,232 250,232 250,227 251,227 251,232 252,232 252,227 253,227 253,232 254,232 254,232 255,232 255,232 256,232 256,232 257,232 257,232 258,232 258,232 259,232 259,232 260,232 260,232 261,232 261,232 262,232 262,232 263,232 263,210 264,210 264,220 265,220 265,232 266,232 266,232 267,232 267,231 268,231 268,226 269,226 269,232 270,232 270,232 271,232 271,227 272,227 272,232 273,232 273,232 274,232 274,232 275,232 275,232 276,232 276,232 277,232 277,228 278,228 278,232 279,232 279,232 280,232 280,232 281,232 281,232 282,232 282,232 283,232 283,232 284,232 284,232 285,232 285,232 286,232 286,232 287,232 287,232 288,232 288,232 289,232 289,232 290,232 290,232 291,232 291,232 292,232 292,232 293,232 293,232 294,232 294,230 295,230 295,232 296,232 296,232 297,232 297,232 298,232 298,232 299,232 299,232 300,232 300,232 301,232 301,232 302,232 302,232 303,232 303,232 304,232 304,232 305,232 305,232 306,232 306,232 307,232 307,232 308,232 308,232 309,232 309,232 310,232 310,209 311,209 311,222 312,222 312,232 313,232 313,232 314,232 314,232 315,232 315,232 316,232 316,232 317,232 317,230 318,230 318,226 319,226 319,232 320,232 320,232 321,232 321,232 322,232 322,227 323,227 323,232 324,232 324,232 325,232 325,232 326,232 326,232 327,232 327,227 328,227 328,232 329,232 329,232 330,232 330,232 331,232 331,232 332,232 332,232 333,232 333,232 334,232 334,228 335,228 335,232 336,232 336,232 337,232 337,231 338,231 338,232 339,232 339,232 340,232 340,231 341,231 341,232 342,232 342,232 343,232 343,232 344,232 344,232 345,232 345,232 346,232 346,232 347,232 347,232 348,232 348,232 349,232 349,232 350,232 350,232 351,232 351,232 352,232 352,232 353,232 353,232 354,232 354,232 355,232 355,232 356,232 356,232 357,232 357,229 358,229 358,232 359,232 359,232 360,232 360,232 361,232 361,228 362,228 362,232 363,232 363,232 364,232 364,232 365,232 365,232 366,232 366,232 367,232 367,232 368,232 368,232 369,232 369,232 370,232 370,232 371,232 371,232 372,232 372,232 373,232 373,232 374,232 374,232 375,232 375,232 376,232 376,232 377,232 377,231 378,231 378,232 379,232 379,232 380,232 380,232 381,232 381,232 382,232 382,232 383,232 383,232 384,232 384,232 385,232 385,232 386,232 386,232 387,232 387,232 388,232 388,232 389,232 389,232 390,232 390,232 391,232 391,232 392,232 392,232 393,232 393,232 394,232 394,232 395,232 395,232 396,232 396,232 397,232 397,232 398,232 398,232 399,232 399,232 400,232 400,232 401,232 401,232 402,232 402,232 403,232 403,232 404,232 404,232 405,232 405,232 406,232 406,229 407,229 407,232 408,232 408,232 409,232 409,232 410,232 410,232 411,232 411,232 412,232 412,232 413,232 413,216 414,216 414,224 415,224 415,232 416,232 416,232 417,232 417,232 418,232 418,232 419,232 419,232 420,232 420,206 421,206 421,206 422,206 422,216 423,216 423,210 424,210 424,206 425,206 425,216 426,216 426,206 427,206 427,206 428,206 428,210 429,210 429,210 430,210 430,210 431,210 431,206 432,206 432,206 433,206 433,210 434,210 434,210 435,210 435,230 436,230 436,216 437,216 437,210 438,210 438,224 439,224 439,230 440,230 440,216 441,216 441,218 442,218 442,206 443,206 443,206 444,206 444,218 445,218 445,218 446,218 446,206 447,206 447,232 448,232 448,231 449,231 449,229 450,229 450,232 451,232 451,232 452,232 452,228 453,228 453,232 454,232 454,232 455,232 455,232 456,232 456,232 457,232 457,232 458,232 458,232 459,232 459,232 460,232 460,232 461,232 461,232 462,232 462,232 463,232 463,228 464,228 464,232 465,232 465,232 466,232 466,228 467,228 467,232 468,232 468,232 469,232 469,232 470,232 470,228 471,228 471,232 472,232 472,232 473,232 473,232 474,232 474,228 475,228 475,232 476,232 476,232 477,232 477,232 478,232 478,226 479,226 479,232 480,232 480,232 481,232 481,232 482,232 482,232 483,232 483,232 484,232 484,228 485,228 485,232 486,232 486,232 487,232 487,232 488,232 488,232 489,232 489,232 490,232 490,232 491,232 491,232 492,232 492,232 493,232 493,232 494,232 494,232 495,232 495,232 496,232 496,232 497,232 497,232 498,232 498,232 499,232 499,232 500,232 500,227 501,227 501,232 502,232 502,232 503,232 503,228 504,228 504,232 505,232 505,232 506,232 506,232 507,232 507,232 508,232 508,232 509,232 509,232 510,232 510,232 511,232 511,222 512,222 512,226 513,226 513,212 514,212 514,222 515,222 515,222 516,222 516,212 517,212 517,212 518,212 518,232 519,232 519,214 520,214 520,212 521,212 521,232 522,232 522,232 523,232 523,231 524,231 524,232 525,232 525,232 526,232 526,228 527,228 527,232 528,232 528,232 529,232 529,232 530,232 530,232 531,232 531,227 532,227 532,232 533,232 533,232 534,232 534,232 535,232 535,232 536,232 536,232 537,232 537,232 538,232 538,232 539,232 539,232 540,232 540,232 541,232 541,232 542,232 542,232 543,232 543,226 544,226 544,232 545,232 545,232 546,232 546,232 547,232 547,232 548,232 548,230 549,230 549,232 550,232 550,232 551,232 551,232 552,232 552,232 553,232 553,232 554,232 554,232 555,232 555,232 556,232 556,232 557,232 557,232 558,232 558,232 559,232 559,232 560,232 560,232 561,232 561,232 562,232 562,232 563,232 563,232 564,232 564,232 565,232 565,232 566,232 566,232 567,232 567,232 568,232 568,232 569,232 569,224 570,224 570,227 571,227 571,232 572,232 572,232 573,232 573,232 574,232 574,232 575,232 575,232 576,232 576,232 577,232 577,232 578,232 578,232 579,232 579,232 580,232 580,232 581,232 581,232 582,232 582,232 583,232 583,232 584,232 584,232 585,232 585,232 586,232 586,232 587,232 587,232 588,232 588,227 589,227 589,232 590,232 590,232 591,232 591,232 592,232 592,232 593,232 593,232 594,232 594,232 595,232 595,232 596,232 596,232 597,232 597,232 598,232 598,232 599,232 599,232 600,232 600,232 601,232 601,232 602,232 602,232 603,232 603,232 604,232 604,232 605,232 605,232 606,232 606,232 607,232 607,232 608,232 608,232 609,232 609,232 610,232 610,232 611,232 611,232 612,232 612,232 613,232 613,232 614,232 614,232 615,232 615,232 616,232 616,232 617,232 617,232 618,232 618,232 619,232 619,232 620,232 620,232 621,232 621,219 622,219 622,220 623,220 623,232 624,232 624,232 625,232 625,232 626,232 626,230 627,230 627,232 628,232 628,232 629,232 629,232 630,232 630,232 631,232 631,232 632,232 632,231 633,231 633,228 634,228 634,232 635,232 635,232 636,232 636,229 637,229 637,229 638,229 638,232 639,232 639,232 640,232 640,232 641,232 641,232 642,232 642,232 643,232 643,232 644,232 644,232 645,232 645,232 646,232 646,232 647,232 647,232 648,232 648,232 649,232 649,232 650,232 650,232 651,232 651,232 652,232 652,232 653,232 653,232 654,232 654,232 655,232 655,232 656,232 656,232 657,232 657,232 658,232 658,232 659,232 659,229 660,229 660,232 661,232 661,232 662,232 662,232 663,232 663,232 664,232 664,232 665,232 665,232 666,232 666,232 667,232 667,232 668,232 668,228 669,228 669,232 670,232 670,232 671,232 671,232 672,232 672,232 673,232 673,217 674,217 674,232 675,232 675,232 676,232 676,232 677,232 677,232 678,232 678,232 679,232 679,232 680,232 680,232 681,232 681,232 682,232 682,232 683,232 683,232 684,232 684,229 685,229 685,232 686,232 686,232 687,232 687,232 688,232 688,232 689,232 689,232 690,232 690,232 691,232 691,232 692,232 692,232 693,232 693,232 694,232 694,232 695,232 695,232 696,232 696,232 697,232 697,232 698,232 698,232 699,232 699,232 700,232 700,232 701,232 701,232 702,232 702,232 703,232 703,232 704,232 704,232 705,232 705,232 706,232 706,232 707,232 707,232 708,232 708,227 709,227 709,232 710,232 710,232 711,232 711,232 712,232 712,232 713,232 713,232 714,232 714,232 715,232 715,232 716,232 716,232 717,232 717,231 718,231 718,232 719,232 719,232 720,232 720,232 721,232 721,232 722,232 722,232 723,232 723,232 724,232 724,232 725,232 725,232 726,232 726,232 727,232 727,228 728,228 728,232 729,232 729,228 730,228 730,232 731,232 731,232 732,232 732,232 733,232 733,206"/><rect x="193" y="233" width="1" height="2" fill="#eef0fc"/><rect x="197" y="233" width="1" height="2" fill="#eef0fc"/><rect x="220" y="233" width="1" height="1" fill="#eef0fc"/><rect x="226" y="233" width="1" height="2" fill="#eef0fc"/><rect x="231" y="233" width="1" height="3" fill="#eef0fc"/><rect x="236" y="233" width="1" height="1" fill="#eef0fc"/><rect x="246" y="233" width="1" height="3" fill="#eef0fc"/><rect x="260" y="233" width="1" height="2" fill="#eef0fc"/><rect x="271" y="233" width="1" height="4" fill="#eef0fc"/><rect x="275" y="233" width="1" height="2" fill="#eef0fc"/><rect x="285" y="233" width="1" height="2" fill="#eef0fc"/><rect x="293" y="233" width="1" height="2" fill="#eef0fc"/><rect x="303" y="233" width="1" height="4" fill="#eef0fc"/><rect x="304" y="233" width="1" height="1" fill="#eef0fc"/><rect x="328" y="233" width="1" height="2" fill="#eef0fc"/><rect x="340" y="233" width="1" height="2" fill="#eef0fc"/><rect x="342" y="233" width="1" height="4" fill="#eef0fc"/><rect x="363" y="233" width="1" height="2" fill="#eef0fc"/><rect x="367" y="233" width="1" height="1" fill="#eef0fc"/><rect x="370" y="233" width="1" height="1" fill="#eef0fc"/><rect x="381" y="233" width="1" height="4" fill="#eef0fc"/><rect x="384" y="233" width="1" height="2" fill="#eef0fc"/><rect x="397" y="233" width="1" height="2" fill="#eef0fc"/><rect x="400" y="233" width="1" height="4" fill="#eef0fc"/><rect x="407" y="233" width="1" height="3" fill="#eef0fc"/><rect x="416" y="233" width="1" height="3" fill="#eef0fc"/><rect x="417" y="233" width="1" height="4" fill="#eef0fc"/><rect x="427" y="233" width="1" height="4" fill="#eef0fc"/><rect x="450" y="233" width="1" height="3" fill="#eef0fc"/><rect x="458" y="233" width="1" height="2" fill="#eef0fc"/><rect x="463" y="233" width="1" height="2" fill="#eef0fc"/><rect x="464" y="233" width="1" height="2" fill="#eef0fc"/><rect x="467" y="233" width="1" height="4" fill="#eef0fc"/><rect x="471" y="233" width="1" height="1" fill="#eef0fc"/><rect x="483" y="233" width="1" height="2" fill="#eef0fc"/><rect x="506" y="233" width="1" height="2" fill="#eef0fc"/><rect x="521" y="233" width="1" height="2" fill="#eef0fc"/><rect x="524" y="233" width="1" height="4" fill="#eef0fc"/><rect x="531" y="233" width="1" height="1" fill="#eef0fc"/><rect x="537" y="233" width="1" height="3" fill="#eef0fc"/><rect x="540" y="233" width="1" height="1" fill="#eef0fc"/><rect x="551" y="233" width="1" height="2" fill="#eef0fc"/><rect x="554" y="233" width="1" height="2" fill="#eef0fc"/><rect x="559" y="233" width="1" height="4" fill="#eef0fc"/><rect x="567" y="233" width="1" height="1" fill="#eef0fc"/><rect x="571" y="233" width="1" height="1" fill="#eef0fc"/><rect x="572" y="233" width="1" height="4" fill="#eef0fc"/><rect x="582" y="233" width="1" height="1" fill="#eef0fc"/><rect x="590" y="233" width="1" height="3" fill="#eef0fc"/><rect x="600" y="233" width="1" height="4" fill="#eef0fc"/><rect x="608" y="233" width="1" height="4" fill="#eef0fc"/><rect x="609" y="233" width="1" height="2" fill="#eef0fc"/><rect x="626" y="233" width="1" height="1" fill="#eef0fc"/><rect x="633" y="233" width="1" height="2" fill="#eef0fc"/><rect x="635" y="233" width="1" height="1" fill="#eef0fc"/><rect x="640" y="233" width="1" height="2" fill="#eef0fc"/><rect x="645" y="233" width="1" height="4" fill="#eef0fc"/><rect x="657" y="233" width="1" height="1" fill="#eef0fc"/><rect x="667" y="233" width="1" height="2" fill="#eef0fc"/><rect x="669" y="233" width="1" height="2" fill="#eef0fc"/><rect x="677" y="233" width="1" height="4" fill="#eef0fc"/><rect x="687" y="233" width="1" height="2" fill="#eef0fc"/><rect x="690" y="233" width="1" height="2" fill="#eef0fc"/><rect x="706" y="233" width="1" height="4" fill="#eef0fc"/><rect x="713" y="233" width="1" height="1" fill="#eef0fc"/><rect x="726" y="233" width="1" height="4" fill="#eef0fc"/></svg><div class="a" style="left:186px;top:232px;width:623px;height:1px;background:#16161c;"></div><div class="a" style="left:5px;top:371px;width:805px;height:1px;background:#000;"></div><span class="t" style="left:159.10px;top:219.00px;font-size:12px;font-weight:700;letter-spacing:-0.163px;">-1,0</span><span class="t" style="left:163.00px;top:236.00px;font-size:12px;font-weight:700;letter-spacing:-0.194px;">1,0</span><span class="t" style="left:162.90px;top:263.00px;font-size:12px;letter-spacing:-0.144px;">0,5</span><span class="t" style="left:162.70px;top:296.00px;font-size:12px;font-weight:700;letter-spacing:-0.044px;">0,0</span><span class="t" style="left:159.30px;top:330.00px;font-size:12px;letter-spacing:-0.229px;">-0,5</span><span class="t" style="left:159.10px;top:357.00px;font-size:12px;font-weight:700;letter-spacing:-0.163px;">-1,0</span><div class="a" style="left:181px;top:268px;width:4px;height:1px;background:#000;"></div><div class="a" style="left:181px;top:302px;width:4px;height:1px;background:#000;"></div><div class="a" style="left:181px;top:336px;width:4px;height:1px;background:#000;"></div><div class="a" style="left:180px;top:232px;width:6px;height:1px;background:#000;"></div><div class="a" style="left:1.5px;top:372px;width:812px;height:4px;background:#94a1f7;"></div><div class="a" style="left:1.5px;top:372px;width:3.5px;height:28px;background:#94a1f7;"></div><div class="a" style="left:810px;top:372px;width:3.5px;height:28px;background:#94a1f7;"></div><div class="a" style="left:6px;top:377px;width:148px;height:23px;background:#dce5fc;"></div><div class="a" style="left:155px;top:377px;width:30px;height:23px;background:#dce5fc;"></div><div class="a" style="left:186px;top:377px;width:623px;height:23px;background:#c3c3c3;"></div><div class="a" style="left:5px;top:376px;width:805px;height:1px;background:#000;"></div><div class="a" style="left:5px;top:376px;width:1px;height:24px;background:#000;"></div><div class="a" style="left:154px;top:376px;width:1px;height:24px;background:#000;"></div><div class="a" style="left:185px;top:376px;width:1px;height:24px;background:#000;"></div><div class="a" style="left:809px;top:376px;width:1px;height:24px;background:#000;"></div><span class="t" style="left:30.00px;top:382.00px;font-size:13px;color:#1a1a1a;letter-spacing:-0.355px;">Метки 1</span><svg style="left:0;top:376px" width="200" height="24" viewBox="0 376 200 24">
<path d="M13.6 384.4 L21.8 392.6 M21.8 384.4 L13.6 392.6" stroke="#333" stroke-width="1.1" fill="none"/>
<path d="M119.8 391 L124.4 386.2 L129 391" stroke="#444" stroke-width="1" fill="none"/>
<circle cx="137.2" cy="388.6" r="0.9" fill="#333"/><circle cx="142.2" cy="388.6" r="0.9" fill="#333"/><circle cx="147.2" cy="388.6" r="0.9" fill="#333"/>
</svg><svg style="left:340px;top:170px" width="90" height="250" viewBox="340 170 90 250">
<path d="M368.4 180.6 H382.8 L375.6 192.6 Z" fill="#64d064" stroke="#4b6b4b" stroke-width="0.8" stroke-linejoin="round"/>
<path d="M368.9 181 H372.4 V186.6 Z" fill="#a4e6a4"/>
<rect x="372.1" y="177.5" width="1" height="27.5" fill="#000"/>
<rect x="374.9" y="206" width="1" height="187" fill="#000"/>
<rect x="372.4" y="377" width="1" height="15" fill="#000"/>
<path d="M365.6 400 L370.8 391.8 H377.4 L380 400 Z" fill="#b9bdf6" stroke="#000" stroke-width="0.9" stroke-linejoin="round"/>
<path d="M369.4 400 V396.6 Q369.4 393.6 371.2 393.6 Q372.9 393.6 372.9 396.6 V400 M373.6 400 V396.6 Q373.6 393.6 375.3 393.6 Q377 393.6 377 396.6 V400" fill="none" stroke="#000" stroke-width="1"/>
<rect x="380.7" y="378.7" width="12.6" height="17" fill="#fff" stroke="#2a2a2a" stroke-width="1"/>
<rect x="385.8" y="379.8" width="1.1" height="14.2" fill="#111"/>
<rect x="340" y="400" width="90" height="1" fill="#f0f0f0"/>
<rect x="353" y="365.4" width="62.7" height="46.5" rx="7" fill="none" stroke="#000" stroke-width="3.2"/>
</svg><div class="a" style="left:207px;top:408.2px;width:146px;height:1.8px;background:#7a7a7a;border-radius:1px 0 0 1px"></div><div class="a" style="left:415px;top:408.2px;width:270px;height:1.8px;background:#7a7a7a;border-radius:0 1px 1px 0"></div><div class="a" style="left:822px;top:322px;width:2px;height:43px;background:#8a8a8a;border-radius:1px"></div><div class="hl" style="left:0;top:480px;width:832px;background:#e6e6ea"></div><div class="hl" style="left:253px;top:511.5px;width:579px;background:#e6e6ea"></div><div class="vl" style="left:620.2px;top:418px;height:62px;background:#e6e6ea"></div><div class="vl" style="left:623px;top:418px;height:62px;background:#e6e6ea"></div><div class="vl" style="left:437.5px;top:481px;height:31px;background:#e6e6ea"></div><div class="vl" style="left:440.5px;top:481px;height:31px;background:#e6e6ea"></div><svg style="left:4.2px;top:442px" width="8" height="13" viewBox="0 0 8 13"><rect x="0" y="0" width="2.1" height="2.1" fill="#82839f"/><rect x="4.85" y="0" width="2.1" height="2.1" fill="#82839f"/><rect x="0" y="4.9" width="2.1" height="2.1" fill="#82839f"/><rect x="4.85" y="4.9" width="2.1" height="2.1" fill="#82839f"/><rect x="0" y="9.8" width="2.1" height="2.1" fill="#82839f"/><rect x="4.85" y="9.8" width="2.1" height="2.1" fill="#82839f"/></svg><span class="t" style="left:18.00px;top:430.00px;font-size:12.5px;letter-spacing:-0.083px;">Темп</span><span class="t" style="left:83.00px;top:430.00px;font-size:12.5px;letter-spacing:-0.132px;">Тактовый размер</span><div class="a" style="left:18px;top:448.5px;width:41px;height:21px;box-sizing:border-box;border:1px solid #e3e3e3;background:#f0f0f0;border-radius:2px"></div><span class="t" style="left:24.20px;top:453.00px;font-size:12px;color:#9a9a9a;letter-spacing:-1.716px;">120</span><svg style="left:60px;top:448px" width="80" height="22" viewBox="60 448 80 22">
<rect x="62.5" y="449.5" width="12" height="9" fill="#f0f0f0" stroke="#e6e6e6"/><rect x="62.5" y="460.5" width="12" height="9" fill="#f0f0f0" stroke="#e6e6e6"/>
<path d="M65.6 455.6 L68.5 452.4 L71.4 455.6 Z" fill="#b5b5b5"/><path d="M65.6 463.4 L68.5 466.6 L71.4 463.4 Z" fill="#b5b5b5"/>
<rect x="117.5" y="449.5" width="12.6" height="9" fill="#f6f6f6" stroke="#dadada"/><rect x="117.5" y="460.5" width="12.6" height="9" fill="#f6f6f6" stroke="#dadada"/>
<path d="M120.6 455.8 L123.8 452.2 L127 455.8 Z" fill="#111"/><path d="M120.6 463.2 L123.8 466.8 L127 463.2 Z" fill="#111"/>
</svg><div class="a" style="left:83.5px;top:448.5px;width:31px;height:21px;box-sizing:border-box;border:1px solid #e6e6e6;border-bottom:1px solid #868686;background:#fff;border-radius:2px"></div><span class="t" style="left:89.00px;top:453.00px;font-size:12px;">4</span><span class="t" style="left:137.20px;top:450.00px;font-size:16.5px;color:#1a1a1a;">/</span><div class="a" style="left:147.5px;top:448px;width:48.5px;height:21.5px;box-sizing:border-box;border:1px solid #d0d0d0;background:#fff;border-radius:2px"></div><span class="t" style="left:151.50px;top:453.00px;font-size:12px;">4</span><svg style="left:180px;top:450px" width="16" height="16" viewBox="180 450 16 16"><path d="M183.6 457 L187.8 461 L192 457" fill="none" stroke="#555" stroke-width="1"/></svg><svg style="left:209.2px;top:441.8px" width="8" height="13" viewBox="0 0 8 13"><rect x="0" y="0" width="2.1" height="2.1" fill="#82839f"/><rect x="4.85" y="0" width="2.1" height="2.1" fill="#82839f"/><rect x="0" y="4.9" width="2.1" height="2.1" fill="#82839f"/><rect x="4.85" y="4.9" width="2.1" height="2.1" fill="#82839f"/><rect x="0" y="9.8" width="2.1" height="2.1" fill="#82839f"/><rect x="4.85" y="9.8" width="2.1" height="2.1" fill="#82839f"/></svg><div class="a" style="left:223px;top:428px;width:13px;height:13px;box-sizing:border-box;border:1px solid #5a5a5a;background:#f4f4f4;border-radius:3px"></div><span class="t" style="left:238.00px;top:428.00px;font-size:13px;letter-spacing:-0.455px;">Привязать:</span><div class="a" style="left:223px;top:448px;width:148px;height:21.5px;box-sizing:border-box;border:1px solid #a6a6a6;background:#fff;border-radius:2px"></div><div class="a" style="left:228px;top:451.6px;width:123px;height:14.6px;background:#ededed;"></div><span class="t" style="left:228.60px;top:453.00px;font-size:12.5px;color:#8a8a8a;letter-spacing:-0.182px;">к 1/8</span><svg style="left:354px;top:450px" width="16" height="16" viewBox="354 450 16 16"><path d="M357.8 457 L362 461 L366.2 457" fill="none" stroke="#bdbdbd" stroke-width="1"/></svg><svg style="left:379.2px;top:441.8px" width="8" height="13" viewBox="0 0 8 13"><rect x="0" y="0" width="2.1" height="2.1" fill="#82839f"/><rect x="4.85" y="0" width="2.1" height="2.1" fill="#82839f"/><rect x="0" y="4.9" width="2.1" height="2.1" fill="#82839f"/><rect x="4.85" y="4.9" width="2.1" height="2.1" fill="#82839f"/><rect x="0" y="9.8" width="2.1" height="2.1" fill="#82839f"/><rect x="4.85" y="9.8" width="2.1" height="2.1" fill="#82839f"/></svg><div class="a" style="left:390px;top:429px;width:226px;height:39px;box-sizing:border-box;border:1px solid #c6c6c9;background:#323447;box-shadow:inset 0 0 0 1px #f4f4f6"></div><span class="t" style="left:395.55px;top:436.00px;font-size:28.4px;color:#ffffff;letter-spacing:5.493px;transform:scaleX(0.93);transform-origin:0 50%;">00</span><span class="t" style="left:440.20px;top:436.00px;font-size:28.4px;color:#ffffff;transform:scaleX(0.93);">ч</span><span class="t" style="left:465.55px;top:436.00px;font-size:28.4px;color:#ffffff;letter-spacing:5.171px;transform:scaleX(0.93);transform-origin:0 50%;">00</span><span class="t" style="left:509.63px;top:436.00px;font-size:28.4px;color:#ffffff;transform:scaleX(0.93);">м</span><span class="t" style="left:538.95px;top:436.00px;font-size:28.4px;color:#ffffff;letter-spacing:4.956px;transform:scaleX(0.93);transform-origin:0 50%;">57</span><span class="t" style="left:584.00px;top:436.00px;font-size:28.4px;color:#ffffff;transform:scaleX(0.93);">с</span><svg style="left:600px;top:440px" width="16" height="16" viewBox="600 440 16 16"><path d="M602.9 446.9 H612 L607.45 451.9 Z" fill="#fff"/></svg><svg style="left:4.2px;top:505px" width="8" height="13" viewBox="0 0 8 13"><rect x="0" y="0" width="2.1" height="2.1" fill="#82839f"/><rect x="4.85" y="0" width="2.1" height="2.1" fill="#82839f"/><rect x="0" y="4.9" width="2.1" height="2.1" fill="#82839f"/><rect x="4.85" y="4.9" width="2.1" height="2.1" fill="#82839f"/><rect x="0" y="9.8" width="2.1" height="2.1" fill="#82839f"/><rect x="4.85" y="9.8" width="2.1" height="2.1" fill="#82839f"/></svg><span class="t" style="left:18.00px;top:487.00px;font-size:13px;letter-spacing:-0.486px;">Выделение</span><div class="btn" style="left:60.2px;top:510px;width:22.7px;height:22px;border-radius:3px"></div><svg style="left:60px;top:510px" width="23" height="22" viewBox="60 510 23 22"><path d="M77.40 520.60 L77.39 520.93 L77.37 521.26 L77.32 521.59 L76.91 521.83 L76.33 522.00 L75.76 522.11 L75.33 522.23 L75.24 522.44 L75.14 522.66 L75.03 522.87 L74.90 523.07 L74.77 523.27 L74.63 523.45 L74.74 523.88 L74.93 524.43 L75.07 525.01 L75.06 525.50 L74.80 525.70 L74.53 525.88 L74.25 526.06 L73.96 526.21 L73.66 526.36 L73.36 526.48 L72.93 526.25 L72.50 525.83 L72.12 525.39 L71.81 525.08 L71.57 525.11 L71.34 525.13 L71.10 525.14 L70.86 525.13 L70.63 525.11 L70.39 525.08 L70.08 525.39 L69.70 525.83 L69.27 526.25 L68.84 526.48 L68.54 526.36 L68.24 526.21 L67.95 526.06 L67.67 525.88 L67.40 525.70 L67.14 525.50 L67.13 525.01 L67.27 524.43 L67.46 523.88 L67.57 523.45 L67.43 523.27 L67.30 523.07 L67.17 522.87 L67.06 522.66 L66.96 522.44 L66.87 522.23 L66.44 522.11 L65.87 522.00 L65.29 521.83 L64.88 521.59 L64.83 521.26 L64.81 520.93 L64.80 520.60 L64.81 520.27 L64.83 519.94 L64.88 519.61 L65.29 519.37 L65.87 519.20 L66.44 519.09 L66.87 518.97 L66.96 518.76 L67.06 518.54 L67.17 518.33 L67.30 518.13 L67.43 517.93 L67.57 517.75 L67.46 517.32 L67.27 516.77 L67.13 516.19 L67.14 515.70 L67.40 515.50 L67.67 515.32 L67.95 515.14 L68.24 514.99 L68.54 514.84 L68.84 514.72 L69.27 514.95 L69.70 515.37 L70.08 515.81 L70.39 516.12 L70.63 516.09 L70.86 516.07 L71.10 516.06 L71.34 516.07 L71.57 516.09 L71.81 516.12 L72.12 515.81 L72.50 515.37 L72.93 514.95 L73.36 514.72 L73.66 514.84 L73.96 514.99 L74.25 515.14 L74.53 515.32 L74.80 515.50 L75.06 515.70 L75.07 516.19 L74.93 516.77 L74.74 517.32 L74.63 517.75 L74.77 517.93 L74.90 518.13 L75.03 518.33 L75.14 518.54 L75.24 518.76 L75.33 518.97 L75.76 519.09 L76.33 519.20 L76.91 519.37 L77.32 519.61 L77.37 519.94 L77.39 520.27 Z" fill="none" stroke="#2a2a2a" stroke-width="1.2" stroke-linejoin="round"/><circle cx="71.1" cy="520.6" r="2.016" fill="none" stroke="#2a2a2a" stroke-width="1.2"/></svg><div class="a" style="left:89px;top:486px;width:158px;height:23px;box-sizing:border-box;border:1px solid #c6c6c9;background:#323447;box-shadow:inset 0 0 0 1px #f4f4f6"></div><span class="t" style="left:93.75px;top:491.00px;font-size:14.2px;color:#ffffff;letter-spacing:4.220px;transform:scaleX(0.9);transform-origin:0 50%;">00</span><span class="t" style="left:116.00px;top:491.00px;font-size:14.2px;color:#ffffff;transform:scaleX(0.9);">ч</span><span class="t" style="left:127.35px;top:491.00px;font-size:14.2px;color:#ffffff;letter-spacing:4.109px;transform:scaleX(0.9);transform-origin:0 50%;">00</span><span class="t" style="left:149.72px;top:491.00px;font-size:14.2px;color:#ffffff;transform:scaleX(0.9);">м</span><span class="t" style="left:164.05px;top:491.00px;font-size:14.2px;color:#ffffff;letter-spacing:4.109px;transform:scaleX(0.9);transform-origin:0 50%;">55</span><span class="t" style="left:184.62px;top:491.00px;font-size:14.2px;color:#ffffff;transform:scaleX(0.9);">.</span><span class="t" style="left:189.45px;top:491.00px;font-size:14.2px;color:#ffffff;letter-spacing:4.054px;transform:scaleX(0.9);transform-origin:0 50%;">873</span><span class="t" style="left:221.95px;top:491.00px;font-size:14.2px;color:#ffffff;transform:scaleX(0.9);">с</span><svg style="left:232px;top:492.1px" width="14" height="12" viewBox="232 0 14 12"><path d="M233.9 3.2 H242.9 L238.4 8.2 Z" fill="#fff"/></svg><div class="a" style="left:89px;top:510px;width:158px;height:23px;box-sizing:border-box;border:1px solid #c6c6c9;background:#323447;box-shadow:inset 0 0 0 1px #f4f4f6"></div><span class="t" style="left:93.75px;top:515.00px;font-size:14.2px;color:#ffffff;letter-spacing:4.220px;transform:scaleX(0.9);transform-origin:0 50%;">00</span><span class="t" style="left:116.00px;top:515.00px;font-size:14.2px;color:#ffffff;transform:scaleX(0.9);">ч</span><span class="t" style="left:127.35px;top:515.00px;font-size:14.2px;color:#ffffff;letter-spacing:4.109px;transform:scaleX(0.9);transform-origin:0 50%;">00</span><span class="t" style="left:149.72px;top:515.00px;font-size:14.2px;color:#ffffff;transform:scaleX(0.9);">м</span><span class="t" style="left:164.05px;top:515.00px;font-size:14.2px;color:#ffffff;letter-spacing:4.109px;transform:scaleX(0.9);transform-origin:0 50%;">55</span><span class="t" style="left:184.62px;top:515.00px;font-size:14.2px;color:#ffffff;transform:scaleX(0.9);">.</span><span class="t" style="left:189.45px;top:515.00px;font-size:14.2px;color:#ffffff;letter-spacing:4.054px;transform:scaleX(0.9);transform-origin:0 50%;">873</span><span class="t" style="left:221.95px;top:515.00px;font-size:14.2px;color:#ffffff;transform:scaleX(0.9);">с</span><svg style="left:232px;top:516.1px" width="14" height="12" viewBox="232 0 14 12"><path d="M233.9 3.2 H242.9 L238.4 8.2 Z" fill="#fff"/></svg><svg style="left:254.8px;top:489.2px" width="8" height="13" viewBox="0 0 8 13"><rect x="0" y="0" width="2.1" height="2.1" fill="#82839f"/><rect x="4.85" y="0" width="2.1" height="2.1" fill="#82839f"/><rect x="0" y="4.9" width="2.1" height="2.1" fill="#82839f"/><rect x="4.85" y="4.9" width="2.1" height="2.1" fill="#82839f"/><rect x="0" y="9.8" width="2.1" height="2.1" fill="#82839f"/><rect x="4.85" y="9.8" width="2.1" height="2.1" fill="#82839f"/></svg><div class="btn" style="left:264px;top:483px;width:26px;height:26px;border-radius:3px"></div><svg style="left:260px;top:480px" width="180" height="32" viewBox="260 480 180 32"><path d="M269.6 489.4 L283.4 496.3 L269.6 503.2 Z" fill="#3f8e62" stroke="#3f8e62" stroke-width="1" stroke-linejoin="round"/><rect x="295.4" y="500" width="135.4" height="1" fill="#c3d3e6"/><rect x="295.4" y="497" width="1" height="3" fill="#c3d3e6"/><rect x="305" y="497" width="1" height="3" fill="#c3d3e6"/><rect x="314.6" y="497" width="1" height="3" fill="#c3d3e6"/><rect x="324.2" y="497" width="1" height="3" fill="#c3d3e6"/><rect x="333.8" y="497" width="1" height="3" fill="#c3d3e6"/><rect x="343.4" y="497" width="1" height="3" fill="#c3d3e6"/><rect x="353" y="497" width="1" height="3" fill="#c3d3e6"/><rect x="362.6" y="497" width="1" height="3" fill="#c3d3e6"/><rect x="372.2" y="497" width="1" height="3" fill="#c3d3e6"/><rect x="381.8" y="497" width="1" height="3" fill="#c3d3e6"/><rect x="391.4" y="497" width="1" height="3" fill="#c3d3e6"/><rect x="401" y="497" width="1" height="3" fill="#c3d3e6"/><rect x="410.6" y="497" width="1" height="3" fill="#c3d3e6"/><rect x="420.2" y="497" width="1" height="3" fill="#c3d3e6"/><rect x="429.8" y="497" width="1" height="3" fill="#c3d3e6"/><rect x="296" y="490" width="4.4" height="1.1" fill="#000"/><rect x="424" y="490" width="5" height="1.1" fill="#000"/><rect x="425.95" y="488" width="1.1" height="5" fill="#000"/><circle cx="340.3" cy="500" r="5.3" fill="#f9f9f9" stroke="#2a2a2a" stroke-width="1.3"/></svg><div class="a" style="left:0px;top:544px;width:832px;height:24px;background:#f0f0f0;"></div><div class="hl" style="left:0;top:544px;width:832px;background:#dfdfdf"></div><div class="vl" style="left:10px;top:548px;height:17px;background:#d8d8d8"></div><div class="vl" style="left:244.5px;top:548px;height:17px;background:#d8d8d8"></div><div class="vl" style="left:607px;top:548px;height:17px;background:#d8d8d8"></div><span class="t" style="left:15.70px;top:551.00px;font-size:12px;letter-spacing:-0.172px;">Проигрывание в паузе.</span><span class="t" style="left:250.00px;top:551.00px;font-size:12px;letter-spacing:-0.237px;">Щёлкните и перетащите для выделения аудио</span><span class="t" style="left:612.00px;top:551.00px;font-size:12px;letter-spacing:-0.427px;">Реальная частота: 48000 Гц</span><svg style="left:818px;top:555px" width="12" height="12" viewBox="0 0 12 12"><rect x="9" y="2" width="2" height="2" fill="#b4b4b4"/><rect x="6" y="5" width="2" height="2" fill="#b4b4b4"/><rect x="9" y="5" width="2" height="2" fill="#b4b4b4"/><rect x="3" y="8" width="2" height="2" fill="#b4b4b4"/><rect x="6" y="8" width="2" height="2" fill="#b4b4b4"/><rect x="9" y="8" width="2" height="2" fill="#b4b4b4"/></svg></div></div><svg style="left:203px;top:0;z-index:5" width="280" height="1"><line x1="0" y1="0.5" x2="278" y2="0.5" stroke="#3c3c3c" stroke-width="1" stroke-dasharray="6 2 3 1 4 2 5 1 2 2 7 3"/></svg></body></html>
